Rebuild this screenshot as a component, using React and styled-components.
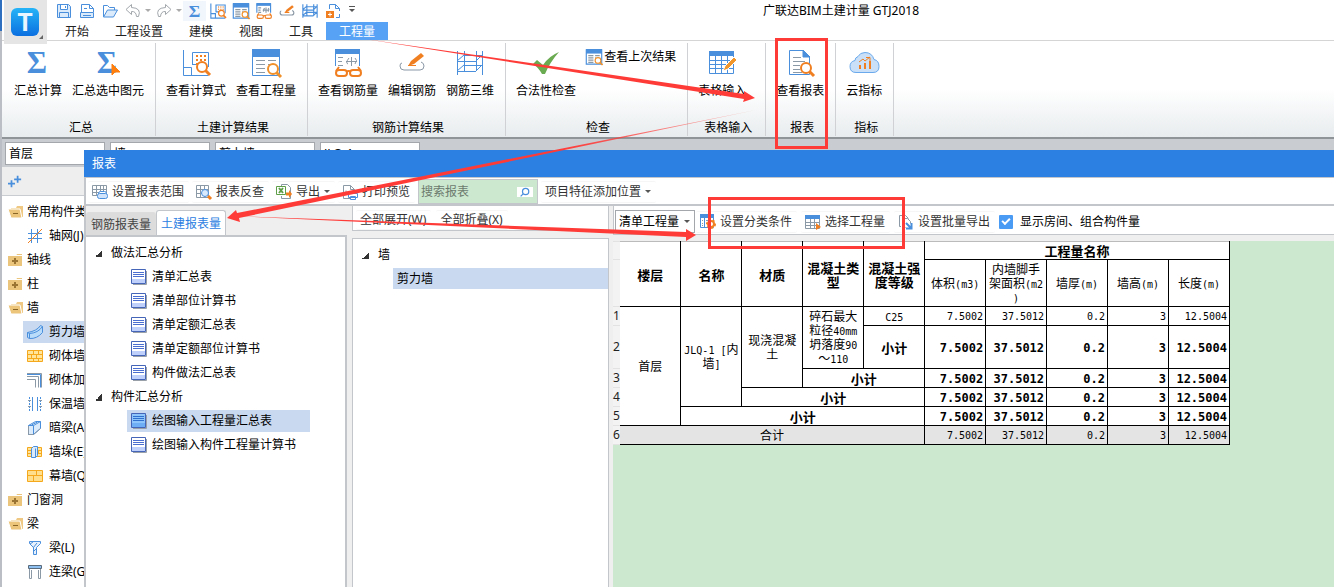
import { Fragment } from "react"
import styled, { createGlobalStyle, css } from "styled-components"

const GlobalStyle = createGlobalStyle`
  *, *::before, *::after {
    box-sizing: border-box;
  }

  body {
    margin: 0;
    background: #fff;
    color: #000;
    font-family: "Noto Sans", "Noto Sans CJK SC", sans-serif;
    font-size: 12px;
    line-height: 16px;
  }

  button, input, select {
    font: inherit;
    color: inherit;
  }

  ul {
    list-style: none;
    margin: 0;
    padding: 0;
  }

  svg {
    display: block;
    flex: none;
  }
`

/* ---------- icons ---------- */

const blue = "#4a8fdc"
const orange = "#f07f22"
const gray = "#8b98a5"
const pale = "#dcebfb"

const Svg = ({ size = 16, box = 16, children }) => (
  <svg
    width={size}
    height={size}
    viewBox={`0 0 ${box} ${box}`}
    fill="none"
    stroke={blue}
    strokeWidth={box > size ? 2 : 1}
    overflow="visible"
    aria-hidden="true"
  >
    {children}
  </svg>
)

const Lens = ({ x, y, r = 5, color = orange, w = 2 }) => (
  <g stroke={color} strokeWidth={w}>
    <circle cx={x} cy={y} r={r} fill="#fff" />
    <path d={`M${x + r * 0.7} ${y + r * 0.7}l${r * 0.9} ${r * 0.9}`} strokeWidth={w + 1} />
  </g>
)

const Sigma = ({ size = 28, cursor }) => (
  <Svg size={size} box={28}>
    <text
      x="13"
      y="24"
      textAnchor="middle"
      fontFamily="Liberation Serif"
      fontWeight="bold"
      fontSize="31"
      fill={blue}
      stroke="none"
    >
      Σ
    </text>
    {cursor && <path d="M18 15v11l3-3 5 0z" fill="#ff7f0e" stroke="#ff7f0e" />}
  </Svg>
)

const FormulaIcon = ({ size = 28 }) => (
  <Svg size={size} box={28}>
    <path d="M1.500 1v25.500H26.500M1.500 18.500h8v8M10.500 16V3.500h16V18M10.500 15.500h4" />
    <g fill={orange} stroke="none">
      {[6, 10, 14].map((y) =>
        [14, 18, 22].map((x) => <rect key={`${x}-${y}`} x={x} y={y} width="2" height="2" />)
      )}
    </g>
    <Lens x={20} y={18} />
  </Svg>
)

const SheetLensIcon = ({ size = 28, accent = "#f0902a" }) => (
  <Svg size={size} box={28}>
    <path d="M.5 1.500h27v25H.5z" fill="#fff" />
    <path d="M0 0h28v8H0z" fill={blue} stroke="none" />
    <path d="M4 11.500h9M4 15.500h9M4 19.500h9M4 23.500h9M16 11.500h8M16 15.500h2" stroke={gray} />
    <Lens x={21} y={20} color={accent} />
  </Svg>
)

const GlassesIcon = ({ size = 28 }) => (
  <Svg size={size} box={28}>
    <path d="M1.500 17V1.500h24V17" fill="#fff" />
    <path d="M1 0h25v5H1z" fill={blue} stroke="none" />
    <path d="M4 8.500h5M4 12.500h4M4 16.500h5M12 12.500h11M17.500 8v9M15 9q-4 5-1 6M21 15q3-4 0-6" stroke={gray} />
    <g stroke={orange} strokeWidth="2">
      <path d="M5 18l-3 4M24 18l3 4M12 23q3-2 5 0" />
      <rect x="2" y="21" width="11" height="6" rx="3" fill="#fff" />
      <rect x="16" y="21" width="11" height="6" rx="3" fill="#fff" />
    </g>
  </Svg>
)

const RebarEditIcon = ({ size = 28 }) => (
  <Svg size={size} box={28}>
    <path d="M4 14Q2 14 2 17q0 4 4 4h16q4 0 4-4q0-3-3-4" stroke={gray} />
    <path d="M10 17l3-5L23 4l3 3-10 8z" fill={orange} stroke="none" />
    <path d="M10 16.500h8" stroke={orange} />
  </Svg>
)

const Rebar3dIcon = ({ size = 28 }) => (
  <Svg size={size} box={28}>
    <path d="M1.500 2v24M8.500 2v20M20.500 2v20M26.500 2v24M1 12.500h19M8 6.500h19M1 22.500h19M8 16.500h19M1 12l7-6M20 12l6-6M1 22l7-6M20 22l6-6" />
  </Svg>
)

const CheckMarkIcon = () => (
  <Svg size={28} box={28}>
    <path d="M1 15l4-4 6 5Q17 7 27 3 18 13 13 25h-3Q6 18 1 15z" fill="#6aaa50" stroke="none" />
  </Svg>
)

const TablePenIcon = () => (
  <Svg size={28} box={28}>
    <path d="M1.500 2.500h24v22h-24z" fill="#fff" />
    <path d="M1 2h25v5H1z" fill={blue} stroke="none" />
    <path d="M1 11.500h24M1 15.500h24M1 19.500h24M7.500 7v17M13.500 7v17M19.500 7v17" />
    <path d="M15 22l2-5 9-9 3 3-9 9z" fill="#f0962a" stroke="#fff" />
  </Svg>
)

const ReportIcon = () => (
  <Svg size={28} box={28}>
    <path d="M3.500 1.500h14l6 6v18h-20z" fill="#fff" />
    <path d="M17 1v7h7z" fill={blue} />
    <path d="M7 8.500h8M7 12.500h12M7 16.500h7M7 20.500h7M7 23.500h9" stroke={gray} />
    <Lens x={20} y={19} />
  </Svg>
)

const CloudIcon = () => (
  <svg width="31" height="28" viewBox="0 0 31 28" fill="none" stroke={blue} aria-hidden="true">
    <path
      d="M7 23.500q-6 0-6-6 0-5 5-6 0-3 3-4 2-4 7-4 7 0 9 7 5 1 5 7 0 6-6 6z"
      fill="#c9e0f8"
      stroke="#6aa9ec"
    />
    <path d="M10 13l4-3 2 2 5-4M17 8.500h4v4" stroke={orange} />
    <path d="M10 16h2v4h-2zM15 14h2v6h-2zM20 12h2v8h-2z" fill={orange} stroke="none" />
  </svg>
)

const SaveIcon = () => (
  <Svg>
    <path d="M1.500 1.500h11l2 2v11h-13zM4.500 1.500v5h7v-5M3.500 14.500v-5h9v5M9.500 3v2" fill={pale} />
  </Svg>
)

const NewIcon = () => (
  <Svg>
    <path d="M2.500 9V1.500h8l4 4V9M10.500 1.500v4h4M5 5.500h3" />
    <path d="M1.500 9.500h13v5h-13zM4 12.500h8" fill={pale} />
  </Svg>
)

const OpenIcon = () => (
  <Svg>
    <path d="M1.500 14V2.500h4l2 2h5V7" />
    <path d="M1.500 14l4-7h10l-4 7z" fill={pale} />
  </Svg>
)

const UndoIcon = ({ flip }) => (
  <Svg>
    <g transform={flip ? "matrix(-1 0 0 1 16 0)" : undefined}>
      <path
        d="M6.500 1.500L1 6.500l5.500 5V8.500Q11 8 11.500 13.500h2Q17 5 6.500 4.500z"
        stroke="#a3a8ad"
      />
    </g>
  </Svg>
)

const AddFileIcon = () => (
  <Svg>
    <path d="M4.500 6V1.500h6l4 4V8M10.500 1.500v4h4M11 14.500h3.500V11" />
    <path d="M1 8h8v7H1z" fill={orange} stroke="none" />
    <path d="M5 9.500v4M3 11.500h4" stroke="#fff" />
  </Svg>
)

const RangeIcon = () => (
  <Svg>
    <path d="M.5 1.500h14v10H.5zM0 5.500h15M0 8.500h15M4.500 1v10M8.500 1v10M11.500 1v10" stroke={gray} />
    <rect x="6.500" y="7.500" width="8" height="5" rx="2" fill="#fff" />
    <rect x="5.500" y="9.500" width="10" height="5" rx="2" fill="#cfe3fa" />
  </Svg>
)

const TraceIcon = () => (
  <Svg>
    <path d="M.5 1.500h12v12H.5zM0 5.500h12M0 9.500h12M4.500 1v12M8.500 1v12" stroke={gray} />
    <circle cx="9" cy="9" r="3.500" fill="#d9eafc" />
    <path d="M12 12l3 3" stroke={orange} strokeWidth="3" />
  </Svg>
)

const ExportIcon = () => (
  <Svg>
    <path d="M5.500 3V.5h6l3 3V14.500h-9V12" stroke={gray} />
    <path d="M.5 2.500h9v8h-9z" fill="#fff" stroke="#5d9e47" />
    <path d="M3 4l4 5M7 4L3 9" stroke="#5d9e47" strokeWidth="2" />
    <path d="M10 8.500h3V6l3 4-3 4v-2.500h-3z" fill={orange} stroke="none" />
  </Svg>
)

const PreviewIcon = () => (
  <Svg>
    <path d="M1.500 1.500h7l4 4V14.500h-11zM8.500 1.500v4h4M4 6.500v3" stroke={gray} />
    <path d="M6.500 9.500h9v4h-9zM8.500 7.500h5v2M8.500 12.500h5v3h-5z" fill="#fff" />
  </Svg>
)

const ConditionIcon = () => (
  <Svg>
    <path d="M.5 1.500h13v12H.5zM4.500 2v11M9.500 2v11" />
    <path d="M0 0h14v4H0z" fill={blue} stroke="none" />
    <path d="M2 6.500h1M6 6.500h2M2 9.500h1M6 9.500h2M2 11.500h1" stroke={gray} />
    <circle cx="11" cy="10" r="3" fill="#fff" stroke={orange} strokeWidth="2" />
    <circle cx="11" cy="10" r="4" stroke={orange} strokeWidth="2" strokeDasharray="2 2" />
  </Svg>
)

const PickIcon = () => (
  <Svg>
    <path d="M.5 1.500h14v13H.5zM0 8.500h14M0 11.500h14M5.500 5v10M9.500 5v10" stroke={gray} />
    <path d="M0 1h15v4H0z" fill={blue} stroke="none" />
    <path d="M11 9v7l5-3z" fill={orange} stroke="none" />
  </Svg>
)

const BatchIcon = () => (
  <Svg>
    <path d="M3 12.500H1.500v-11h6l3 3M4.500 13.500V4.500h5l3 3v2M4.500 13.500h3" stroke={gray} />
    <path d="M8 9l5 5M13.500 9v5.500H8" strokeWidth="2" />
  </Svg>
)

const FolderIcon = ({ open }) => (
  <Svg>
    {open ? (
      <>
        <path d="M3 4h5l1-2h6v11H3z" fill="#efc983" stroke="none" />
        <path d="M0 5h12l2 9H3z" fill="#ecc47a" stroke="#fff" />
        <path d="M5 9.500h5" stroke="#8a6528" />
      </>
    ) : (
      <>
        <path d="M0 4h8l1-2h5v12H0z" fill="#ecc57c" stroke="none" />
        <path d="M1 3.500h13" stroke="#fff" />
        <path d="M4 9h6M7 6v6" stroke="#9a7433" strokeWidth="2" />
      </>
    )}
  </Svg>
)

const AxisIcon = () => (
  <Svg>
    <path d="M4.500 1v14M10.500 1v14M1 5.500h14M1 10.500h14" />
    <path d="M1 15L15 1" stroke={orange} />
  </Svg>
)

const ShearWallIcon = () => (
  <Svg>
    <path d="M.5 8.500Q10 7 13.500 1.500l2 1v6Q10 15 2.500 14.500l-2-1z" fill="#b9dcfb" />
    <path d="M.5 8.500l2 1Q11 9 15.500 2.500M2.500 9.500v5" />
  </Svg>
)

const BrickIcon = () => (
  <Svg>
    <path
      d="M.5 2.500h15v11H.5zM0 6.500h15M0 10.500h15M6.500 2v4M11.500 2v4M4.500 6v4M9.500 6v4M6.500 10v4M11.500 10v4"
      fill="#ffe49b"
      stroke="#f5a81c"
    />
  </Svg>
)

const ReinforceIcon = () => (
  <Svg>
    <path d="M0 1.500h14.500v14M0 4.500h11.500v11M0 7.500h8.500v8" stroke={gray} />
    <path d="M0 2.500h13.500v13" />
  </Svg>
)

const InsulationIcon = () => (
  <Svg>
    <path d="M5.500 1v14M10.500 1v14" />
    <path d="M2.500 1v14M13.500 1v14" strokeDasharray="2 1" />
    <path d="M1 4.500h3M1 10.500h3M12 4.500h3M12 10.500h3" stroke={gray} />
  </Svg>
)

const HiddenBeamIcon = () => (
  <Svg>
    <path d="M1.500 5.500l7-4h5v7l-7 6h-5zM1.500 5.500h5l7-4M6.500 5.500v9M4.500 5l6-3" fill={pale} />
    <path d="M1.500 6v8.500h5l7-6" stroke={gray} />
  </Svg>
)

const PierIcon = () => (
  <Svg>
    <path d="M.5 3.500h14v9H.5zM0 6.500h14M0 9.500h14M4.500 3v4M11.500 7v3" fill="#ffe49b" stroke="#f5a81c" />
    <path d="M4.500 4.500l2-2h4v9l-2 2h-4zM8.500 4.500v9" fill={pale} />
  </Svg>
)

const CurtainIcon = () => (
  <Svg>
    <path d="M.5 2.500h15v11H.5zM0 7.500h15M9.500 2v5M6.500 8v6" fill="#ffdf8c" stroke="#f5a81c" />
  </Svg>
)

const BeamIcon = () => (
  <Svg>
    <path d="M2.500 1.500h11v2l-4 4v7h-3v-7l-4-4zM6 8l4-5M6 12l4-4M3 4l3-2" fill="#e6f1fd" />
  </Svg>
)

const LinkBeamIcon = () => (
  <Svg>
    <path d="M2.500 3v11.500h2V6M11.500 6v8.500h2V3" stroke={gray} />
    <path d="M1.500 1.500h13v3h-13z" fill="#8fc0f2" stroke="#5a6b7c" />
  </Svg>
)

const SheetIcon = ({ active }) => (
  <Svg>
    <path d="M2 15.500h13.500V2" stroke="#9aa0a8" />
    <path d="M.5.5h14v14H.5z" fill={active ? "#8ec6fb" : "#fff"} stroke="#4566b8" />
    <path d="M1 10h13v4H1z" fill={active ? "#6eaef5" : "#bfd0fa"} stroke="none" />
    <path d="M2 3.500h11M2 5.500h11M2 7.500h11" stroke={active ? "#2f70cf" : "#4a6fd0"} />
  </Svg>
)

const Caret = styled.span`
  flex: none;
  border: 3px solid transparent;
  border-top-color: ${(props) => props.$color || "#555"};
  border-bottom: 0;
`

const MoreMark = styled(Caret)`
  position: relative;

  &::before {
    content: "";
    position: absolute;
    top: -6px;
    left: -3px;
    width: 6px;
    height: 1px;
    background: #555;
  }
`

const Expander = styled.span`
  flex: none;
  width: 7px;
  height: 7px;
  background: linear-gradient(135deg, transparent 50%, #333 50%);
`

/* ---------- main window ---------- */

const Desktop = styled.div`
  position: relative;
  min-height: 100vh;
  overflow: hidden;
  padding-left: 2px;
  background: linear-gradient(#2f6fbf 31px, #bbbec4 31px) 0 0 / 2px 100% no-repeat;
`

const Header = styled.header`
  display: flex;
  height: 41px;
  padding-left: 2px;
  border-bottom: 1px solid #d5d5d5;
`

const Logo = styled.div`
  display: flex;
  justify-content: center;
  width: 43px;
  height: 44px;
  padding-top: 7px;
  background: #e5e5e5;
  z-index: 1;
`

const HeaderRows = styled.div`
  flex: 1;
  display: flex;
  flex-direction: column;
  justify-content: space-between;
  padding-left: 5px;
`

const TitleRow = styled.div`
  display: flex;
  align-items: center;
  height: 21px;
`

const QuickButton = styled.button`
  display: flex;
  align-items: center;
  justify-content: center;
  width: ${(props) => (props.$narrow ? "8px" : "23px")};
  height: 20px;
  padding: 0;
  border: 0;
  background: ${(props) => (props.$active ? "#f1f5fc" : "transparent")};
`

const MoreButton = styled(QuickButton)`
  width: 16px;
`

const Title = styled.h1`
  flex: 1;
  margin: 0;
  padding-right: 12px;
  text-align: center;
  font-size: 12px;
  font-weight: 400;
`

const Tabs = styled.nav`
  display: flex;
`

const Tab = styled.button`
  height: 18px;
  padding: 0 13px;
  border: 0;
  line-height: 20px;
  background: ${(props) => (props.$active ? "#57a2f5" : "transparent")};
  color: ${(props) => (props.$active ? "#fff" : "#222")};
`

const Ribbon = styled.div`
  display: flex;
  height: 98px;
  padding-left: 2px;
  border-bottom: 2px solid #8f9499;
  background: linear-gradient(#fff 50%, #e8ecee);
`

const Group = styled.section`
  display: flex;
  flex-direction: column;
  justify-content: space-between;
  margin: 2px 0 1px;
  padding: 6px 11px 0 10px;
  border-right: 1px solid #cfd1d4;
`

const GroupItems = styled.div`
  display: flex;
  align-items: flex-start;
  gap: 10px;
  padding-right: ${(props) => (props.$wide ? "8px" : "0")};
`

const GroupName = styled.div`
  padding-left: 4px;
  text-align: center;
`

const RibbonButton = styled.button`
  display: flex;
  flex-direction: ${(props) => (props.$inline ? "row" : "column")};
  align-items: center;
  gap: ${(props) => (props.$inline ? "2px" : "6px")};
  padding: 0;
  border: 0;
  white-space: nowrap;
  background: transparent;
`

const SelectorBar = styled.div`
  display: flex;
  gap: 5px;
  height: 28px;
  padding: 3px;
  background: #c9ccd1;
`

const Picker = styled.select`
  width: 100px;
  height: 23px;
  padding: 0 4px 0 3px;
  border: 1px solid #a4a8ad;
  border-radius: 0;
  appearance: none;
  background: #fff;
`

const Sidebar = styled.aside`
  width: 200px;
`

const SidebarTools = styled.div`
  display: flex;
  align-items: center;
  height: 29px;
  padding-left: 6px;
  border-bottom: 1px solid #c9ccd1;
  background: #eee;
`

const ComponentList = styled.ul`
  padding: 4px 0 0 6px;
`

const ComponentRow = styled.li`
  display: flex;
  align-items: center;
  gap: ${(props) => (props.$child ? "6px" : "3px")};
  height: ${(props) => (props.$active ? "22px" : "24px")};
  margin: ${(props) => (props.$active ? "1px 0 1px 15px" : props.$child ? "0 0 0 15px" : "0")};
  padding-left: ${(props) => (props.$child ? "4px" : "0")};
  white-space: nowrap;
  background: ${(props) => (props.$active ? "#c9d9ef" : "transparent")};
`

/* ---------- report window ---------- */

const Dialog = styled.section`
  position: absolute;
  top: 150px;
  right: 0;
  bottom: 0;
  left: 84px;
  display: flex;
  flex-direction: column;
  background: #efefef;
  border-left: 2px solid #c3c7cc;
`

const DialogTitle = styled.h2`
  margin: 0 0 0 -2px;
  padding-left: 8px;
  background: #2c80e2;
  color: #fff;
  font-size: 12px;
  font-weight: 400;
  line-height: 27px;
`

const DialogTools = styled.div`
  display: flex;
  align-items: center;
  gap: 3px;
  height: 29px;
  padding: 1px 0 0 2px;
  border: solid #c3c7cc;
  border-width: 1px 0 2px;
  background: #fff;
`

const ToolButton = styled.button`
  display: flex;
  align-items: center;
  gap: 4px;
  height: ${(props) => (props.$short ? "20px" : "22px")};
  padding: 0 5px 0 4px;
  border: 1px solid #f6f6f6;
  border-width: 1px 0;
  border-radius: 2px;
  background: transparent;
  color: #333;
  white-space: nowrap;
`

const Search = styled.label`
  display: flex;
  align-items: center;
  width: 120px;
  height: 25px;
  padding: 0 4px 0 2px;
  border: 1px solid #c3c7cc;
  background: #cce8cf;
`

const SearchInput = styled.input`
  flex: 1;
  min-width: 0;
  padding: 0;
  border: 0;
  outline: 0;
  background: transparent;

  &::placeholder {
    color: #6c7a6e;
    opacity: 1;
  }
`

const SearchMark = styled.span`
  display: flex;
  padding: 0 3px;
  background: #fff;
`

const DialogBody = styled.div`
  flex: 1;
  display: flex;
  min-height: 0;
`

const ReportNav = styled.div`
  display: flex;
  flex-direction: column;
  width: 261px;
  margin-right: 5px;
`

const ReportTabs = styled.div`
  display: flex;
  align-items: flex-end;
  height: 29px;
`

const ReportTab = styled.button`
  height: ${(props) => (props.$active ? "25px" : "23px")};
  padding: 2px 4px 0;
  border: 1px solid ${(props) => (props.$active ? "#c3c7cc" : "#ddd")};
  border-bottom: 0;
  border-radius: 3px 3px 0 0;
  background: ${(props) => (props.$active ? "#fff" : "#dcdcdc")};
  color: ${(props) => (props.$active ? "#2c80e2" : "#444")};
`

const panel = css`
  border: 1px solid #c3c7cc;
  background: #fff;
`

const ReportTree = styled.div`
  ${panel}
  flex: 1;
  padding: 4px 0 0 9px;
  border-width: 2px 2px 0 0;
`

const TreeList = styled.ul`
  width: fit-content;
`

const TreeHead = styled.li`
  display: flex;
  align-items: center;
  gap: 9px;
  height: 24px;
`

const TreeItem = styled.li`
  padding: 1px 0 1px 32px;
`

const TreeLink = styled.a`
  display: flex;
  align-items: center;
  gap: 5px;
  height: 22px;
  padding: 0 14px 0 4px;
  color: inherit;
  text-decoration: none;
  background: ${(props) => (props.$active ? "#c9d9ef" : "transparent")};
`

const PartsColumn = styled.div`
  display: flex;
  flex-direction: column;
  gap: 7px;
  width: 257px;
  margin-right: 4px;
`

const PartsTools = styled.div`
  ${panel}
  display: flex;
  align-items: center;
  gap: 5px;
  height: 25px;
  padding: 4px 0 0 3px;
  border-top: 0;
`

const PartsTree = styled.ul`
  ${panel}
  flex: 1;
  padding: 4px 0 0 9px;
  border-bottom: 0;
`

const PartRow = styled.li`
  margin: 1px 0 0 31px;
  padding-left: 4px;
  line-height: 21px;
  background: #c9d9ef;
`

const ReportColumn = styled.div`
  flex: 1;
  display: flex;
  flex-direction: column;
  gap: 6px;
  min-width: 0;
`

const ReportTools = styled.div`
  ${panel}
  display: flex;
  align-items: center;
  gap: 4px;
  height: 29px;
  padding: 3px 0 0 1px;
  border-width: 0 0 1px 1px;
`

const KindPicker = styled.label`
  display: flex;
  align-items: center;
  width: 80px;
  height: 23px;
  margin-right: -3px;
  padding: 0 4px 0 3px;
  border: 1px solid #a4a8ad;
`

const KindSelect = styled.select`
  flex: 1;
  min-width: 0;
  padding: 0;
  border: 0;
  appearance: none;
  background: transparent;
`

const CheckLabel = styled.label`
  display: flex;
  align-items: center;
  gap: 7px;
`

const CheckBox = styled.input`
  width: 14px;
  height: 14px;
  margin: 0;
  border-radius: 1px;
  appearance: none;
  background: #4a9bf3;

  &:checked::after {
    content: "";
    display: block;
    width: 8px;
    height: 5px;
    margin: 3px;
    border: solid #fff;
    border-width: 0 0 2px 2px;
    rotate: -45deg;
  }
`

const Sheet = styled.div`
  flex: 1;
  background: #cce8cf;
`

const Table = styled.table`
  width: 617px;
  table-layout: fixed;
  border-collapse: collapse;
  line-height: 14px;
  background: #fff;
`

const Cell = styled.td`
  height: ${(props) => props.$height || 19}px;
  padding: 1px 2px 0;
  border: 1px solid #000;
  border-left: ${(props) => (props.$edge ? "0" : "1px solid #000")};
  text-align: center;
  font-size: ${(props) => (props.$strong ? "13px" : "12px")};
  font-weight: ${(props) => (props.$strong ? 700 : 400)};
  background: ${(props) => (props.$total ? "#e4e4e4" : "#fff")};

  thead tr:first-child & {
    border-top-color: #bbb;
  }
`

const NumberCell = styled(Cell)`
  text-align: right;
  font-family: "DejaVu Sans Mono", monospace;
  font-size: ${(props) => (props.$strong ? "12px" : "10px")};
`

const RowNumber = styled.th`
  padding: 0;
  border: solid #e2e2e2;
  border-width: 1px 0;
  font-weight: 400;
  font-size: 12px;
  color: #222;
  background: #f3f3f3;
`

const Latin = styled.span`
  font-family: "DejaVu Sans Mono", monospace;
  font-size: 10px;
  line-height: 12px;
`

const Marks = styled.svg`
  position: absolute;
  top: 0;
  left: 0;
  pointer-events: none;
`

/* ---------- data ---------- */

const menuTabs = ["开始", "工程设置", "建模", "视图", "工具", "工程量"]

const quickItems = [
  { name: "保存", icon: <SaveIcon /> },
  { name: "新建", icon: <NewIcon /> },
  { name: "打开", icon: <OpenIcon /> },
  { name: "撤销", icon: <UndoIcon /> },
  { name: "撤销列表", icon: <Caret $color="#aaa" />, narrow: true },
  { name: "恢复", icon: <UndoIcon flip /> },
  { name: "恢复列表", icon: <Caret $color="#aaa" />, narrow: true },
  { name: "汇总计算", icon: <Sigma size={16} />, active: true },
  { name: "查看计算式", icon: <FormulaIcon size={16} /> },
  { name: "查看工程量", icon: <SheetLensIcon size={16} /> },
  { name: "查看钢筋量", icon: <GlassesIcon size={16} /> },
  { name: "编辑钢筋", icon: <RebarEditIcon size={16} /> },
  { name: "钢筋三维", icon: <Rebar3dIcon size={16} /> },
  { name: "添加", icon: <AddFileIcon /> },
]

const ribbonGroups = [
  {
    name: "汇总",
    items: [
      { text: "汇总计算", icon: <Sigma /> },
      { text: "汇总选中图元", icon: <Sigma cursor /> },
    ],
  },
  {
    name: "土建计算结果",
    items: [
      { text: "查看计算式", icon: <FormulaIcon /> },
      { text: "查看工程量", icon: <SheetLensIcon /> },
    ],
  },
  {
    name: "钢筋计算结果",
    items: [
      { text: "查看钢筋量", icon: <GlassesIcon /> },
      { text: "编辑钢筋", icon: <RebarEditIcon /> },
      { text: "钢筋三维", icon: <Rebar3dIcon /> },
    ],
  },
  {
    name: "检查",
    items: [
      { text: "合法性检查", icon: <CheckMarkIcon /> },
      { text: "查看上次结果", icon: <SheetLensIcon size={16} />, inline: true },
    ],
  },
  { name: "表格输入", wide: true, items: [{ text: "表格输入", icon: <TablePenIcon /> }] },
  { name: "报表", items: [{ text: "查看报表", icon: <ReportIcon /> }] },
  { name: "指标", items: [{ text: "云指标", icon: <CloudIcon /> }] },
]

const pickers = [
  { label: "楼层", value: "首层" },
  { label: "类别", value: "墙" },
  { label: "构件类型", value: "剪力墙" },
  { label: "构件", value: "JLQ-1" },
]

const componentRows = [
  { text: "常用构件类型", icon: <FolderIcon open /> },
  { text: "轴网(J)", icon: <AxisIcon />, child: true },
  { text: "轴线", icon: <FolderIcon /> },
  { text: "柱", icon: <FolderIcon /> },
  { text: "墙", icon: <FolderIcon open /> },
  { text: "剪力墙", icon: <ShearWallIcon />, child: true, active: true },
  { text: "砌体墙", icon: <BrickIcon />, child: true },
  { text: "砌体加筋", icon: <ReinforceIcon />, child: true },
  { text: "保温墙", icon: <InsulationIcon />, child: true },
  { text: "暗梁(A)", icon: <HiddenBeamIcon />, child: true },
  { text: "墙垛(E)", icon: <PierIcon />, child: true },
  { text: "幕墙(Q)", icon: <CurtainIcon />, child: true },
  { text: "门窗洞", icon: <FolderIcon /> },
  { text: "梁", icon: <FolderIcon open /> },
  { text: "梁(L)", icon: <BeamIcon />, child: true },
  { text: "连梁(G)", icon: <LinkBeamIcon />, child: true },
]

const reportGroups = [
  {
    name: "做法汇总分析",
    reports: ["清单汇总表", "清单部位计算书", "清单定额汇总表", "清单定额部位计算书", "构件做法汇总表"],
  },
  {
    name: "构件汇总分析",
    reports: ["绘图输入工程量汇总表", "绘图输入构件工程量计算书"],
  },
]

const activeReport = "绘图输入工程量汇总表"

const quantities = ["7.5002", "37.5012", "0.2", "3", "12.5004"]

const Quantities = (props) =>
  quantities.map((value) => (
    <NumberCell key={value} {...props}>
      {value}
    </NumberCell>
  ))

const Unit = ({ name, unit }) => (
  <>
    {name}
    <Latin>({unit})</Latin>
  </>
)

function ReportTable() {
  return (
    <Table>
      <colgroup>
        <col style={{ width: 7 }} />
        {Array.from({ length: 10 }, (_, i) => (
          <col key={i} />
        ))}
      </colgroup>
      <thead>
        <tr>
          <RowNumber as="td" />
          {["楼层", "名称", "材质", "混凝土类型", "混凝土强度等级"].map((name, i) => (
            <Cell as="th" key={name} rowSpan={2} $strong $edge={i === 0}>
              {name}
            </Cell>
          ))}
          <Cell as="th" colSpan={5} $height={18} $strong>
            工程量名称
          </Cell>
        </tr>
        <tr>
          <RowNumber as="td" />
          <Cell as="th" $height={47}>
            <Unit name="体积" unit="m3" />
          </Cell>
          <Cell as="th">
            内墙脚手
            <br />
            架面积<Latin>(m2</Latin>
            <br />
            <Latin>)</Latin>
          </Cell>
          {["墙厚", "墙高", "长度"].map((name) => (
            <Cell as="th" key={name}>
              <Unit name={name} unit="m" />
            </Cell>
          ))}
        </tr>
      </thead>
      <tbody>
        <tr>
          <RowNumber>1</RowNumber>
          <Cell rowSpan={5} $edge>
            首层
          </Cell>
          <Cell rowSpan={4}>
            <Latin>JLQ-1 [</Latin>内
            <br />墙<Latin>]</Latin>
          </Cell>
          <Cell rowSpan={3}>现浇混凝土</Cell>
          <Cell rowSpan={2}>
            碎石最大
            <br />
            粒径<Latin>40mm</Latin>
            <br />
            坍落度<Latin>90</Latin>
            <br />
            ～<Latin>110</Latin>
          </Cell>
          <Cell>
            <Latin>C25</Latin>
          </Cell>
          <Quantities />
        </tr>
        <tr>
          <RowNumber>2</RowNumber>
          <Cell $height={43} $strong>
            小计
          </Cell>
          <Quantities $strong />
        </tr>
        {[3, 4, 5].map((n) => (
          <tr key={n}>
            <RowNumber>{n}</RowNumber>
            <Cell colSpan={n - 1} $strong>
              小计
            </Cell>
            <Quantities $strong />
          </tr>
        ))}
        <tr>
          <RowNumber>6</RowNumber>
          <Cell colSpan={5} $total $edge>
            合计
          </Cell>
          <Quantities $total />
        </tr>
      </tbody>
    </Table>
  )
}

function ReportDialog() {
  return (
    <Dialog aria-label="报表">
      <DialogTitle>报表</DialogTitle>
      <DialogTools>
        <ToolButton>
          <RangeIcon />
          设置报表范围
        </ToolButton>
        <ToolButton>
          <TraceIcon />
          报表反查
        </ToolButton>
        <ToolButton>
          <ExportIcon />
          导出
          <Caret />
        </ToolButton>
        <ToolButton>
          <PreviewIcon />
          打印预览
        </ToolButton>
        <Search>
          <SearchInput placeholder="搜索报表" aria-label="搜索报表" />
          <SearchMark>
            <Svg size={10}>
              <circle cx="9" cy="7" r="5" />
              <path d="M5 11l-4 4" />
            </Svg>
          </SearchMark>
        </Search>
        <ToolButton>
          项目特征添加位置
          <Caret />
        </ToolButton>
      </DialogTools>
      <DialogBody>
        <ReportNav>
          <ReportTabs>
            <ReportTab>钢筋报表量</ReportTab>
            <ReportTab $active>土建报表量</ReportTab>
          </ReportTabs>
          <ReportTree>
            <TreeList>
              {reportGroups.map((group) => (
                <Fragment key={group.name}>
                  <TreeHead>
                    <Expander />
                    {group.name}
                  </TreeHead>
                  {group.reports.map((name) => (
                    <TreeItem key={name}>
                      <TreeLink href="#report" $active={name === activeReport}>
                        <SheetIcon active={name === activeReport} />
                        {name}
                      </TreeLink>
                    </TreeItem>
                  ))}
                </Fragment>
              ))}
            </TreeList>
          </ReportTree>
        </ReportNav>
        <PartsColumn>
          <PartsTools>
            <ToolButton $short>全部展开(W)</ToolButton>
            <ToolButton $short>全部折叠(X)</ToolButton>
          </PartsTools>
          <PartsTree>
            <TreeHead>
              <Expander />墙
            </TreeHead>
            <PartRow>剪力墙</PartRow>
          </PartsTree>
        </PartsColumn>
        <ReportColumn>
          <ReportTools>
            <KindPicker>
              <KindSelect aria-label="工程量类型">
                <option>清单工程量</option>
              </KindSelect>
              <Caret />
            </KindPicker>
            <ToolButton>
              <ConditionIcon />
              设置分类条件
            </ToolButton>
            <ToolButton>
              <PickIcon />
              选择工程量
            </ToolButton>
            <ToolButton>
              <BatchIcon />
              设置批量导出
            </ToolButton>
            <CheckLabel>
              <CheckBox type="checkbox" defaultChecked />
              显示房间、组合构件量
            </CheckLabel>
          </ReportTools>
          <Sheet>
            <ReportTable />
          </Sheet>
        </ReportColumn>
      </DialogBody>
    </Dialog>
  )
}

export default function App() {
  return (
    <>
      <GlobalStyle />
      <Desktop>
        <Header>
          <Logo>
            <svg width="38" height="36" viewBox="0 0 38 36" aria-hidden="true">
              <defs>
                <linearGradient id="logo" x2="0" y2="1">
                  <stop stopColor="#25b4f7" />
                  <stop offset="1" stopColor="#0b6fe0" />
                </linearGradient>
              </defs>
              <rect x="4" y="1" width="28" height="28" rx="6" fill="url(#logo)" />
              <text x="18" y="24" textAnchor="middle" fontFamily="Lato" fontWeight="900" fontSize="25" fill="#eaf6ff">
                T
              </text>
              <path d="M36 28v4h-4z" fill="#666" />
            </svg>
          </Logo>
          <HeaderRows>
            <TitleRow>
              {quickItems.map((item) => (
                <QuickButton key={item.name} aria-label={item.name} $narrow={item.narrow} $active={item.active}>
                  {item.icon}
                </QuickButton>
              ))}
              <MoreButton aria-label="更多">
                <MoreMark />
              </MoreButton>
              <Title>广联达BIM土建计量 GTJ2018</Title>
            </TitleRow>
            <Tabs>
              {menuTabs.map((name) => (
                <Tab key={name} $active={name === "工程量"}>
                  {name}
                </Tab>
              ))}
            </Tabs>
          </HeaderRows>
        </Header>
        <Ribbon>
          {ribbonGroups.map((group) => (
            <Group key={group.name}>
              <GroupItems $wide={group.wide}>
                {group.items.map((item) => (
                  <RibbonButton key={item.text} $inline={item.inline}>
                    {item.icon}
                    {item.text}
                  </RibbonButton>
                ))}
              </GroupItems>
              <GroupName>{group.name}</GroupName>
            </Group>
          ))}
        </Ribbon>
        <SelectorBar>
          {pickers.map((picker) => (
            <Picker key={picker.label} aria-label={picker.label}>
              <option>{picker.value}</option>
            </Picker>
          ))}
        </SelectorBar>
        <Sidebar>
          <SidebarTools>
            <Svg size={14}>
              <path d="M4 7v8M0 11h8M11 2v8M7 6h8" strokeWidth="2" />
            </Svg>
          </SidebarTools>
          <ComponentList>
            {componentRows.map((row) => (
              <ComponentRow key={row.text} $child={row.child} $active={row.active}>
                {row.icon}
                {row.text}
              </ComponentRow>
            ))}
          </ComponentList>
        </Sidebar>
        <ReportDialog />
        <Marks width="910" height="260" viewBox="0 0 910 260" fill="#ff3b38" aria-hidden="true">
          <defs>
            <linearGradient id="fade" gradientUnits="userSpaceOnUse" x1="756" y1="0" x2="560" y2="0">
              <stop stopColor="#ff3b38" stopOpacity="0.300" />
              <stop offset="1" stopColor="#ff3b38" />
            </linearGradient>
          </defs>
          <path d="M365 39L744 94v-3l11 7-12 4 1-3z" />
          <path d="M756 110L237 213l-1-3-9 8 13 4-1-4z" fill="url(#fade)" />
          <path d="M232 216L686 232v-3l10 6-10 6v-4z" />
          <g fill="none" stroke="#ff3b38" strokeWidth="3">
            <rect x="776.500" y="39.500" width="50" height="108" />
            <rect x="709.500" y="198.500" width="194" height="49" />
          </g>
        </Marks>
      </Desktop>
    </>
  )
}
